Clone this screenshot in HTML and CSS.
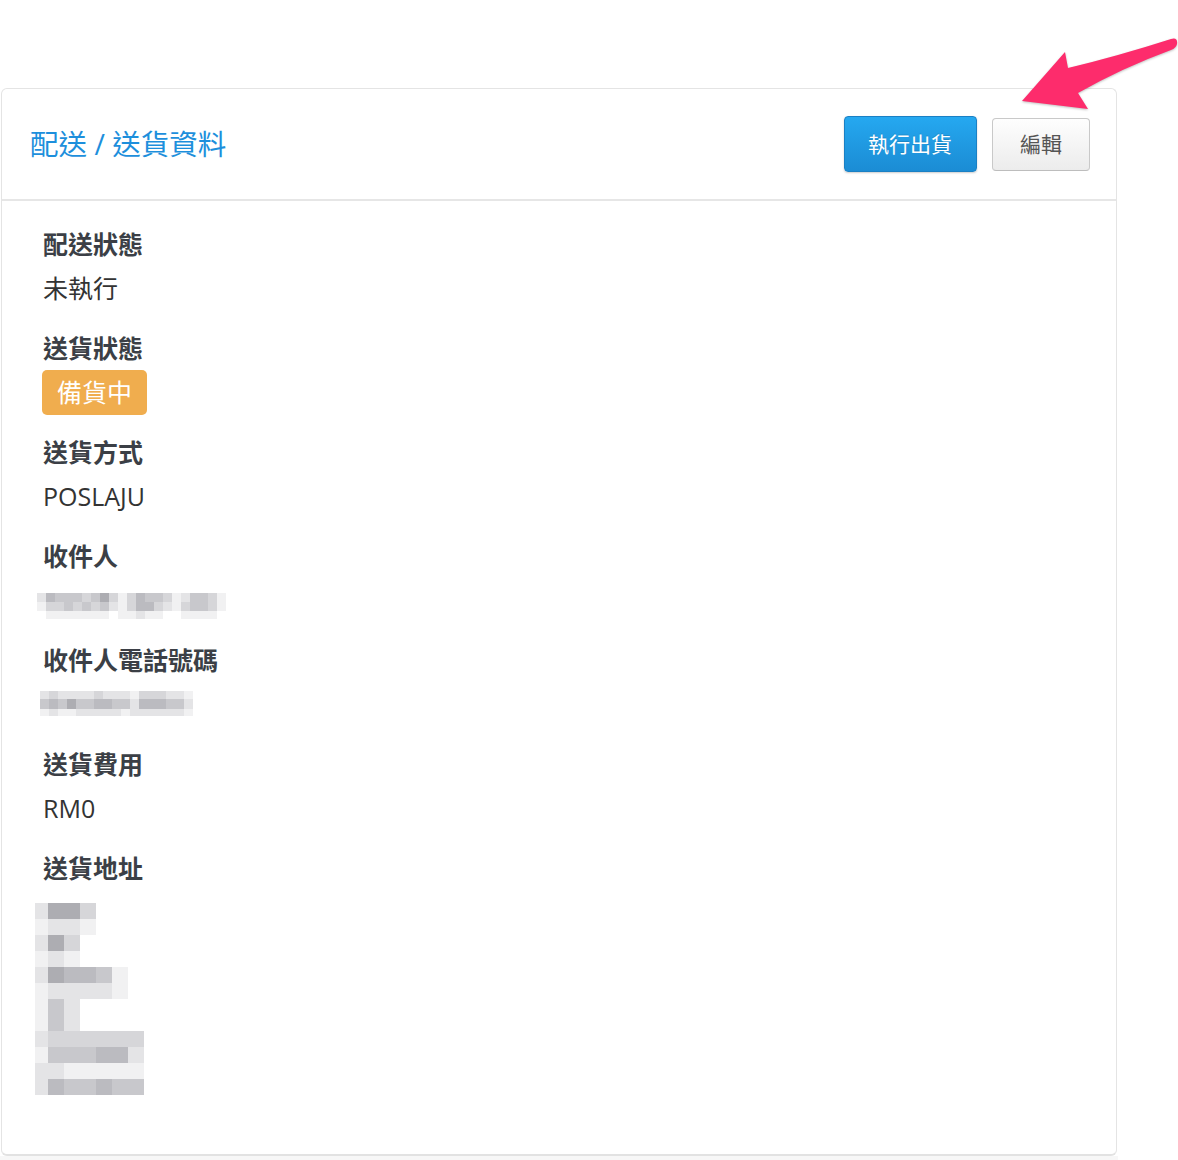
FILE: index.html
```html
<!DOCTYPE html>
<html lang="zh-Hant">
<head>
  <meta charset="UTF-8">
  <meta name="viewport" content="width=device-width, initial-scale=1.0">
  <title>配送 / 送貨資料</title>
  <link rel="stylesheet" href="styles.css">
</head>
<body>
  <!-- pointer arrow overlay -->
  <svg class="pointer" width="178" height="90" viewBox="0 0 178 90">
    <path d="M22,71 L65,22 L68,38 Q118,26 171,9 Q178,7 177,14 Q176,18 171,20 Q122,38 78,63 L88,79 Z" fill="#fd2c6c"/>
  </svg>

  <div class="panel">
    <div class="panel-head">
      <h1 class="panel-title">配送 / 送貨資料</h1>
      <div class="actions">
        <button class="btn btn-primary">執行出貨</button>
        <button class="btn btn-default">編輯</button>
      </div>
    </div>

    <div class="panel-body">
      <div class="field">
        <div class="label">配送狀態</div>
        <div class="value">未執行</div>
      </div>

      <div class="field">
        <div class="label">送貨狀態</div>
        <div class="value"><span class="badge">備貨中</span></div>
      </div>

      <div class="field">
        <div class="label">送貨方式</div>
        <div class="value">POSLAJU</div>
      </div>

      <div class="field">
        <div class="label">收件人</div>
        <div class="value value-name">
          <div class="pix pix-name">
            <i class="e"></i><i class="b"></i><i class="c"></i><i class="c"></i><i class="c"></i><i class="d"></i><i class="c"></i><i class="a"></i><i class="d"></i><i class="f"></i><i class="d"></i><i class="b"></i><i class="c"></i><i class="c"></i><i class="d"></i><i class="f"></i><i class="e"></i><i class="c"></i><i class="c"></i><i class="d"></i><i class="f"></i>
            <i class="f"></i><i class="d"></i><i class="d"></i><i class="c"></i><i class="d"></i><i class="c"></i><i class="d"></i><i class="c"></i><i class="e"></i><i class="f"></i><i class="d"></i><i class="b"></i><i class="b"></i><i class="d"></i><i class="e"></i><i class="f"></i><i class="d"></i><i class="c"></i><i class="c"></i><i class="d"></i><i class="f"></i>
            <i></i><i class="f"></i><i class="f"></i><i class="f"></i><i class="f"></i><i class="f"></i><i class="f"></i><i class="f"></i><i></i><i class="f"></i><i class="f"></i><i class="e"></i><i class="f"></i><i class="f"></i><i></i><i></i><i class="f"></i><i class="f"></i><i class="f"></i><i class="f"></i><i></i>
          </div>
        </div>
      </div>

      <div class="field">
        <div class="label">收件人電話號碼</div>
        <div class="value value-phone">
          <div class="pix pix-phone">
            <i class="e"></i><i class="d"></i><i class="e"></i><i class="e"></i><i class="e"></i><i class="e"></i><i class="d"></i><i class="e"></i><i class="e"></i><i class="e"></i><i class="f"></i><i class="d"></i><i class="d"></i><i class="d"></i><i class="e"></i><i class="e"></i><i class="f"></i>
            <i class="c"></i><i class="b"></i><i class="c"></i><i class="a"></i><i class="c"></i><i class="c"></i><i class="b"></i><i class="b"></i><i class="c"></i><i class="c"></i><i class="e"></i><i class="b"></i><i class="b"></i><i class="b"></i><i class="c"></i><i class="c"></i><i class="e"></i>
            <i class="f"></i><i class="e"></i><i class="f"></i><i class="f"></i><i class="e"></i><i class="e"></i><i class="e"></i><i class="e"></i><i class="e"></i><i class="f"></i><i class="e"></i><i class="e"></i><i class="e"></i><i class="e"></i><i class="e"></i><i class="e"></i><i class="f"></i>
          </div>
        </div>
      </div>

      <div class="field">
        <div class="label">送貨費用</div>
        <div class="value">RM0</div>
      </div>

      <div class="field field-last">
        <div class="label">送貨地址</div>
        <div class="value-address">
          <div class="pix pix-address">
            <i class="e"></i><i class="a"></i><i class="a"></i><i class="d"></i><i></i><i></i><i></i><i></i>
            <i class="f"></i><i class="e"></i><i class="e"></i><i class="f"></i><i></i><i></i><i></i><i></i>
            <i class="e"></i><i class="a"></i><i class="d"></i><i></i><i></i><i></i><i></i><i></i>
            <i class="f"></i><i class="e"></i><i class="f"></i><i></i><i></i><i></i><i></i><i></i>
            <i class="e"></i><i class="a"></i><i class="b"></i><i class="b"></i><i class="c"></i><i class="f"></i><i></i><i></i>
            <i class="f"></i><i class="e"></i><i class="e"></i><i class="e"></i><i class="e"></i><i class="f"></i><i></i><i></i>
            <i class="f"></i><i class="c"></i><i class="e"></i><i></i><i></i><i></i><i></i><i></i>
            <i class="f"></i><i class="c"></i><i class="e"></i><i></i><i></i><i></i><i></i><i></i>
            <i class="e"></i><i class="d"></i><i class="d"></i><i class="d"></i><i class="d"></i><i class="d"></i><i class="d"></i><i></i>
            <i class="f"></i><i class="c"></i><i class="c"></i><i class="c"></i><i class="b"></i><i class="b"></i><i class="e"></i><i></i>
            <i class="e"></i><i class="e"></i><i class="f"></i><i class="f"></i><i class="f"></i><i class="f"></i><i class="f"></i><i></i>
            <i class="e"></i><i class="b"></i><i class="c"></i><i class="c"></i><i class="b"></i><i class="c"></i><i class="c"></i><i></i>
          </div>
        </div>
      </div>
    </div>
  </div>
  <div class="page-foot"></div>
</body>
</html>
```

FILE: styles.css
```css
/* General Styles */
body {
  margin: 0;
  padding-top: 88px;
  background: #fff;
  color: #333;
  font-family: 'Open Sans', 'Noto Sans CJK TC', sans-serif;
}

.pointer {
  position: absolute;
  left: 1000px;
  top: 30px;
  filter: drop-shadow(0 1px 1px rgba(0, 0, 0, 0.25));
}

.panel {
  width: 1114px;
  margin-left: 1px;
  background: #fff;
  border: 1px solid #e4e4e4;
  border-bottom: 2px solid #e2e2e2;
  border-radius: 6px;
}

.page-foot {
  width: 1118px;
  height: 8px;
  background: #f7f7f7;
}

/* Header */
.panel-head {
  display: flex;
  align-items: center;
  justify-content: space-between;
  height: 110px;
  padding: 0 26px 0 28px;
  border-bottom: 2px solid #e6e6e6;
}

.panel-title {
  margin: 0;
  font-size: 28.5px;
  font-weight: 400;
  line-height: 1.2;
  color: #1d8fdc;
}

.actions {
  display: flex;
  align-items: center;
  gap: 15px;
}

.btn {
  font-family: 'Open Sans', 'Noto Sans CJK TC', sans-serif;
  font-size: 21px;
  border-radius: 4px;
  cursor: pointer;
}

.btn-primary {
  padding: 0 24px 0 23px;
  line-height: 54px;
  color: #fff;
  background: linear-gradient(#25a8f0, #1b8cd4);
  border: 1px solid #1a80c4;
  box-shadow: 0 1px 2px rgba(0, 0, 0, 0.2);
  text-shadow: 0 -1px 0 rgba(0, 0, 0, 0.15);
}

.btn-default {
  padding: 0 27px;
  line-height: 51px;
  color: #555;
  background: linear-gradient(#fefefe, #ececec);
  border: 1px solid #c9c9c9;
  border-bottom-color: #bdbdbd;
}

/* Body */
.panel-body {
  padding: 21px 41px 59px;
}

.field {
  margin-bottom: 16px;
}

.field-last {
  margin-bottom: 0;
}

.label {
  font-size: 25px;
  font-weight: 700;
  line-height: 44px;
  color: #3b3f46;
}

.value {
  font-size: 25px;
  line-height: 44px;
  height: 44px;
  color: #333;
}

.badge {
  display: inline-block;
  margin-left: -1px;
  padding: 0 15px;
  line-height: 45px;
  color: #fff;
  background: #f0ad4e;
  border-radius: 5px;
  vertical-align: top;
}

/* pixelated (censored) blocks */
.value-name,
.value-phone,
.value-address {
  box-sizing: border-box;
}

.value-name {
  padding-top: 15px;
}

.value-phone {
  padding-top: 9px;
}

.value-address {
  padding-top: 13px;
}

.pix {
  display: grid;
}

.pix i {
  display: block;
}

.pix-name {
  grid-template-columns: repeat(21, 9px);
  grid-template-rows: 9px 9px 8px;
  margin-left: -6px;
}

.pix-phone {
  grid-template-columns: repeat(17, 9px);
  grid-template-rows: 8px 10px 7px;
  margin-left: -3px;
}

.pix-address {
  grid-template-columns: 13px repeat(7, 16px);
  grid-auto-rows: 16px;
  margin-left: -8px;
}

.pix .a { background: #adadb2; }
.pix .b { background: #bbbbc0; }
.pix .c { background: #c8c8cc; }
.pix .d { background: #d6d6d9; }
.pix .e { background: #e4e4e6; }
.pix .f { background: #f1f1f2; }
```
